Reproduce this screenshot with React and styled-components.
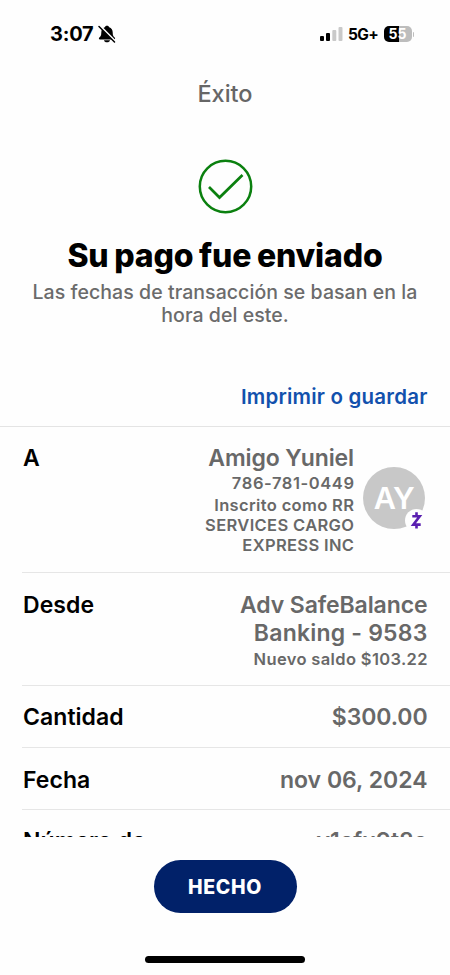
import styled, { createGlobalStyle } from "styled-components";

const GlobalStyle = createGlobalStyle`
  * {
    box-sizing: border-box;
  }
  body {
    margin: 0;
    background: #fefefe;
    font-family: Inter, "Liberation Sans", sans-serif;
    -webkit-font-smoothing: antialiased;
  }
`;

const Screen = styled.div`
  width: 450px;
  height: 975px;
  display: flex;
  flex-direction: column;
  background: #fefefe;
  overflow: hidden;
`;

const StatusBar = styled.header`
  height: 68px;
  flex-shrink: 0;
  display: flex;
  justify-content: space-between;
  padding: 0 36px 0 50px;
`;

const StatusGroup = styled.div`
  display: flex;
  align-items: center;
  gap: ${({ $gap }) => $gap}px;
`;

const Clock = styled.span`
  font-size: 20px;
  font-weight: 700;
  letter-spacing: -0.2px;
`;

const Network = styled.span`
  font-size: 15.5px;
  font-weight: 700;
  letter-spacing: -0.7px;
`;

const Battery = styled.div`
  width: 28px;
  height: 16px;
  border-radius: 5px;
  background: linear-gradient(to right, #000 55%, #bdbdbd 55%);
  color: #fff;
  font-size: 14px;
  font-weight: 700;
  line-height: 16px;
  text-align: center;
`;

const BatteryTip = styled.div`
  width: 1.5px;
  height: 5px;
  margin-left: 1px;
  border-radius: 0 2px 2px 0;
  background: #bdbdbd;
`;

const BatteryWrap = styled.div`
  display: flex;
  align-items: center;
`;

const NavTitle = styled.div`
  padding-top: 11px;
  font-size: 23.5px;
  font-weight: 540;
  line-height: 30px;
  text-align: center;
  color: #666;
`;

const Body = styled.main`
  height: 769px;
  flex-shrink: 0;
  overflow: hidden;
  display: flex;
  flex-direction: column;
`;

const Hero = styled.section`
  display: flex;
  flex-direction: column;
  align-items: center;
  padding-top: 50px;
  text-align: center;
`;

const Heading = styled.h1`
  margin: 23px 0 6px;
  font-size: 32px;
  font-weight: 800;
  line-height: 38px;
  letter-spacing: -0.15px;
  word-spacing: -1.2px;
  white-space: nowrap;
`;

const Note = styled.p`
  width: 410px;
  margin: 0;
  font-size: 19.5px;
  font-weight: 520;
  line-height: 23px;
  letter-spacing: 0.06px;
  color: #6b6b6b;
`;

const PrintLink = styled.a`
  align-self: flex-end;
  margin: 57px 22.5px 16px 0;
  font-size: 20.5px;
  font-weight: 600;
  line-height: 26px;
  letter-spacing: 0.2px;
  color: #1251ad;
`;

const List = styled.dl`
  margin: 0;
  border-top: 1px solid #e4e4e4;
`;

const Row = styled.div`
  display: flex;
  justify-content: space-between;
  height: ${({ $height }) => $height}px;
  margin-left: 22px;
  padding: ${({ $top = 17 }) => $top}px 22.5px 0 1px;
  border-bottom: 1px solid #e6e6e6;
`;

const Label = styled.dt`
  font-size: 23px;
  font-weight: 600;
  line-height: 28px;
  letter-spacing: 0.05px;
  white-space: nowrap;
`;

const Value = styled.dd`
  margin: 0;
  font-size: 23px;
  font-weight: 570;
  line-height: 28px;
  letter-spacing: ${({ $ls = -0.1 }) => $ls}px;
  color: #686868;
  text-align: right;
  white-space: nowrap;
`;

const AccountNumber = styled.span`
  letter-spacing: 0.2px;
`;

const Detail = styled.div`
  margin-top: ${({ $mt = 0 }) => $mt}px;
  margin-right: -${({ $ls = 0.35 }) => $ls}px;
  font-size: 16.5px;
  line-height: ${({ $lh = 20 }) => $lh}px;
  letter-spacing: ${({ $ls = 0.35 }) => $ls}px;
`;

const Recipient = styled.div`
  display: flex;
  gap: 9px;
  margin-right: -21px;
  padding-right: 23.5px;
`;

const Avatar = styled.div`
  position: relative;
  width: 62px;
  height: 62px;
  margin-top: 23px;
  border-radius: 50%;
  background: #c8c8c8;
  color: #fff;
  font-size: 30.5px;
  font-weight: 600;
  line-height: 62px;
  letter-spacing: -0.5px;
  text-align: center;
`;

const ZelleBadge = styled.svg`
  position: absolute;
  right: -3px;
  bottom: -3px;
`;

const Footer = styled.footer`
  flex: 1;
  display: flex;
  flex-direction: column;
  align-items: center;
  padding-top: 23px;
`;

const DoneButton = styled.button`
  width: 143px;
  height: 53px;
  border: none;
  border-radius: 27px;
  background: #012169;
  color: #fff;
  font-family: inherit;
  font-size: 19.5px;
  font-weight: 800;
  letter-spacing: 0.7px;
`;

const HomeIndicator = styled.div`
  width: 160px;
  height: 7px;
  margin-top: 43px;
  border-radius: 4px;
  background: #000;
`;

const BellOff = () => (
  <svg width="18" height="18" viewBox="0 0 18 18">
    <path d="M9 .8c-1.200 0-2 .6-2.200 1.500C4.500 3.200 3.300 5 3.300 7.500c0 3-.7 3.800-2 5-.8.8-.4 1.900.6 1.900h14.200c1 0 1.400-1.100.6-1.900-1.300-1.200-2-2-2-5 0-2.500-1.200-4.300-3.500-5.200C11 1.400 10.200.8 9 .8Z" />
    <path d="M6 15.200h6c-.3 1.300-1.400 2.100-3 2.100s-2.700-.8-3-2.100Z" />
    <path d="M1.500 .5 17.500 16.500" stroke="#fefefe" strokeWidth="2.200" />
    <path d="M1 1.500 16.500 17" stroke="#000" strokeWidth="1.500" strokeLinecap="round" />
  </svg>
);

const Signal = () => (
  <svg width="23" height="14" viewBox="0 0 23 14">
    <rect x="0" y="9" width="4" height="5" rx="1" />
    <rect x="6" y="6" width="4" height="8" rx="1" />
    <rect x="12.300" y="3" width="4" height="11" rx="1" fill="#c9c9c9" />
    <rect x="18.500" y="0" width="4" height="14" rx="1" fill="#c9c9c9" />
  </svg>
);

const CheckCircle = () => (
  <svg width="55" height="55" viewBox="0 0 55 55" fill="none" stroke="#0b800f">
    <circle cx="27.500" cy="27.500" r="25.700" strokeWidth="2.500" />
    <path d="m11 28 10.500 10.500L44.500 16" strokeWidth="2.700" />
  </svg>
);

const App = () => {
  return (
    <>
      <GlobalStyle />
      <Screen>
        <StatusBar>
          <StatusGroup $gap={4}>
            <Clock>3:07</Clock>
            <BellOff />
          </StatusGroup>
          <StatusGroup $gap={5.5}>
            <Signal />
            <Network>5G+</Network>
            <BatteryWrap>
              <Battery>55</Battery>
              <BatteryTip />
            </BatteryWrap>
          </StatusGroup>
        </StatusBar>

        <Body>
          <NavTitle>Éxito</NavTitle>
          <Hero>
            <CheckCircle />
            <Heading>Su pago fue enviado</Heading>
            <Note>
              Las fechas de transacción se basan en la
              <br />
              hora del este.
            </Note>
          </Hero>
          <PrintLink>Imprimir o guardar</PrintLink>

          <List>
            <Row $height={146}>
              <Label>A</Label>
              <Recipient>
                <Value>
                  Amigo Yuniel
                  <Detail $lh={22} $ls={0.6}>
                    786-781-0449
                  </Detail>
                  <Detail $mt={1}>
                    Inscrito como RR
                    <br />
                    SERVICES CARGO
                    <br />
                    EXPRESS INC
                  </Detail>
                </Value>
                <Avatar>
                  AY
                  <ZelleBadge width="23" height="23" viewBox="0 0 23 23">
                    <circle cx="11.500" cy="11.500" r="11.500" fill="#fefefe" />
                    <path
                      d="M7.300 7.200h7.400L8.300 15.600h7.400M11.500 3.200v4M11.500 15.600v4"
                      fill="none"
                      stroke="#5a1fb0"
                      strokeWidth="2.600"
                    />
                  </ZelleBadge>
                </Avatar>
              </Recipient>
            </Row>
            <Row $height={113} $top={18}>
              <Label>Desde</Label>
              <Value>
                Adv SafeBalance
                <br />
                <AccountNumber>Banking - 9583</AccountNumber>
                <Detail $lh={22} $mt={1}>
                  Nuevo saldo $103.22
                </Detail>
              </Value>
            </Row>
            <Row $height={62}>
              <Label>Cantidad</Label>
              <Value>$300.00</Value>
            </Row>
            <Row $height={62} $top={18}>
              <Label>Fecha</Label>
              <Value $ls={0}>nov 06, 2024</Value>
            </Row>
            <Row $height={62} $top={17}>
              <Label>Número de</Label>
              <Value>v1efu9t8o</Value>
            </Row>
          </List>
        </Body>

        <Footer>
          <DoneButton>HECHO</DoneButton>
          <HomeIndicator />
        </Footer>
      </Screen>
    </>
  );
};

export default App;
